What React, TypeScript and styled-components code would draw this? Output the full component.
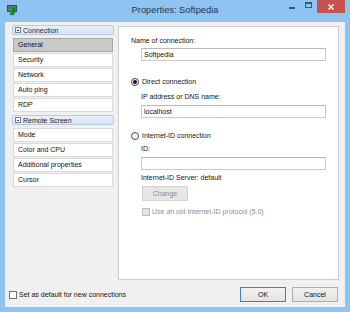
import React, { useState } from 'react';
import styled, { createGlobalStyle } from 'styled-components';

const GlobalStyle = createGlobalStyle`
  body {
    margin: 0;
    font-family: "Liberation Sans", Arial, sans-serif;
  }
`;

const Window = styled.div`
  position: relative;
  width: 350px;
  height: 312px;
  box-sizing: border-box;
  padding: 0 5px 5px;
  background: #8ec3f2;
  display: flex;
  flex-direction: column;
  overflow: hidden;
`;

const TitleBar = styled.div`
  height: 22px;
  display: grid;
  grid-template-columns: 1fr auto 1fr;
  align-items: start;
`;

const AppIcon = styled.svg`
  margin: 5px 0 0 2px;
`;

const Title = styled.div`
  line-height: 20px;
  font-size: 9.3px;
  color: #23384f;
`;

const Controls = styled.div`
  justify-self: end;
  display: flex;
  align-items: flex-start;
`;

const CtrlButton = styled.div<{ $w: number }>`
  width: ${(p) => p.$w}px;
  height: 13px;
  display: flex;
  align-items: center;
  justify-content: center;
`;

const CloseButton = styled(CtrlButton)`
  background: #c8524e;
`;

const MinGlyph = styled.div`
  width: 6px;
  height: 2px;
  margin-top: 2px;
  background: #3d5773;
`;

const MaxGlyph = styled.div`
  width: 7px;
  height: 6px;
  box-sizing: border-box;
  border: 1px solid #3d5773;
  border-top-width: 2px;
  margin-top: -4px;
`;

const Client = styled.div`
  flex: 1;
  background: #f0f0f0;
  display: flex;
  flex-direction: column;
`;

const Body = styled.div`
  height: 258px;
  box-sizing: border-box;
  padding: 4px 6px 0 7px;
  display: flex;
  gap: 4px;
`;

const Sidebar = styled.div`
  width: 102px;
  margin-top: -1px;
  display: flex;
  flex-direction: column;
`;

const GroupHeader = styled.div<{ $first?: boolean }>`
  height: 10px;
  box-sizing: border-box;
  margin: ${(p) => (p.$first ? '0' : '2px')} 0 3px;
  padding-left: 2px;
  border: 1px solid #b5cae3;
  border-radius: 2px;
  background: linear-gradient(#e8f0f9, #d7e4f3);
  display: flex;
  align-items: center;
  gap: 2px;
  font-size: 7px;
  color: #1b2a3b;
`;

const Toggle = styled.span`
  width: 6px;
  height: 6px;
  box-sizing: border-box;
  border: 1px solid #71839a;
  background: #fff;
  display: flex;
  align-items: center;
  justify-content: center;
  &::after {
    content: '';
    width: 2px;
    height: 1px;
    background: #33475e;
  }
`;

const NavItem = styled.div<{ $active?: boolean }>`
  height: 14px;
  box-sizing: border-box;
  margin: 0 1px 1px;
  padding-left: 4px;
  border: 1px solid ${(p) => (p.$active ? '#a8a8a8' : '#dadada')};
  background: ${(p) => (p.$active ? '#c9c9c9' : '#fff')};
  line-height: 12px;
  font-size: 7px;
  color: #111;
`;

const Panel = styled.div`
  width: 221px;
  height: 254px;
  box-sizing: border-box;
  padding: 9px 12px 0;
  background: #fff;
  border: 1px solid #cdcdcd;
  display: flex;
  flex-direction: column;
`;

const Label = styled.div<{ $mt?: number; $indent?: boolean }>`
  height: 9px;
  line-height: 9px;
  margin-top: ${(p) => p.$mt ?? 0}px;
  margin-left: ${(p) => (p.$indent ? 10 : 0)}px;
  font-size: 7px;
  color: #151515;
  white-space: nowrap;
`;

const TextBox = styled.div<{ $mt: number }>`
  width: 185px;
  height: 13px;
  box-sizing: border-box;
  margin: ${(p) => p.$mt}px 0 0 10px;
  padding-left: 2px;
  border: 1px solid #c9c9c9;
  border-top-color: #b8b8b8;
  line-height: 11px;
  font-size: 7px;
  color: #111;
`;

const RadioRow = styled.label<{ $mt: number }>`
  height: 9px;
  margin-top: ${(p) => p.$mt}px;
  display: flex;
  align-items: center;
  gap: 3px;
  font-size: 7px;
  color: #151515;
  cursor: default;
`;

const Radio = styled.span<{ $on?: boolean }>`
  width: 8px;
  height: 8px;
  box-sizing: border-box;
  border-radius: 50%;
  border: 1px solid #444;
  background: #fff;
  display: flex;
  align-items: center;
  justify-content: center;
  &::after {
    content: '';
    display: ${(p) => (p.$on ? 'block' : 'none')};
    width: 4px;
    height: 4px;
    border-radius: 50%;
    background: #111;
  }
`;

const Button = styled.div<{ $default?: boolean; $disabled?: boolean }>`
  width: 46px;
  height: 15px;
  box-sizing: border-box;
  border: 1px solid ${(p) => (p.$default ? '#3d80b3' : p.$disabled ? '#d2d2d2' : '#acacac')};
  background: ${(p) => (p.$disabled ? '#e6e6e6' : 'linear-gradient(#f1f1f1, #e3e3e3)')};
  display: flex;
  align-items: center;
  justify-content: center;
  font-size: 7px;
  color: ${(p) => (p.$disabled ? '#8a8a8a' : '#111')};
`;

const ChangeButton = styled(Button)`
  margin: 4px 0 0 11px;
`;

const CheckRow = styled.label<{ $mt?: number; $indent?: number; $muted?: boolean }>`
  height: 9px;
  margin: ${(p) => p.$mt ?? 0}px 0 0 ${(p) => p.$indent ?? 0}px;
  display: flex;
  align-items: center;
  gap: 2px;
  font-size: 7px;
  color: ${(p) => (p.$muted ? '#8e8e8e' : '#151515')};
  white-space: nowrap;
  cursor: default;
`;

const Box = styled.span<{ $disabled?: boolean }>`
  width: 8px;
  height: 8px;
  box-sizing: border-box;
  border: 1px solid ${(p) => (p.$disabled ? '#bdbdbd' : '#707070')};
  background: ${(p) => (p.$disabled ? '#e4e4e4' : '#fff')};
`;

const Footer = styled.div`
  flex: 1;
  padding: 2px 7px 0 4px;
  display: flex;
  align-items: center;
`;

const Spacer = styled.div`
  flex: 1;
`;

const ButtonRow = styled.div`
  display: flex;
  gap: 6px;
`;

const connectionItems = ['General', 'Security', 'Network', 'Auto ping', 'RDP'];
const screenItems = ['Mode', 'Color and CPU', 'Additional properties', 'Cursor'];

const App = () => {
  const [active, setActive] = useState('General');
  const [direct, setDirect] = useState(true);

  return (
    <>
      <GlobalStyle />
      <Window>
        <TitleBar>
          <AppIcon width="11" height="11" viewBox="0 0 11 11">
            <rect x="0" y="0" width="10" height="7" fill="#4a4a4a" />
            <rect x="1" y="1" width="8" height="5" fill="#6d6d6d" />
            <rect x="3" y="8" width="4" height="2" fill="#4a4a4a" />
            <path d="M3 3 L5.5 2 L8 3 L8 6 Q8 9 5.5 10.5 Q3 9 3 6 Z" fill="#17a33a" />
            <path d="M5.5 2 L8 3 L8 6 Q8 9 5.5 10.5 Z" fill="#0f7f2b" />
          </AppIcon>
          <Title>Properties: Softpedia</Title>
          <Controls>
            <CtrlButton $w={16}>
              <MinGlyph />
            </CtrlButton>
            <CtrlButton $w={17}>
              <MaxGlyph />
            </CtrlButton>
            <CloseButton $w={28}>
              <svg width="6" height="6" viewBox="0 0 6 6">
                <path d="M0.5 0.5 L5.5 5.5 M5.5 0.5 L0.5 5.5" stroke="#fff" strokeWidth="1.4" />
              </svg>
            </CloseButton>
          </Controls>
        </TitleBar>
        <Client>
          <Body>
            <Sidebar>
              <GroupHeader $first>
                <Toggle />
                Connection
              </GroupHeader>
              {connectionItems.map((item) => (
                <NavItem key={item} $active={active === item} onClick={() => setActive(item)}>
                  {item}
                </NavItem>
              ))}
              <GroupHeader>
                <Toggle />
                Remote Screen
              </GroupHeader>
              {screenItems.map((item) => (
                <NavItem key={item} $active={active === item} onClick={() => setActive(item)}>
                  {item}
                </NavItem>
              ))}
            </Sidebar>
            <Panel>
              <Label>Name of connection:</Label>
              <TextBox $mt={3}>Softpedia</TextBox>
              <RadioRow $mt={16} onClick={() => setDirect(true)}>
                <Radio $on={direct} />
                Direct connection
              </RadioRow>
              <Label $mt={6} $indent>
                IP address or DNS name:
              </Label>
              <TextBox $mt={4}>localhost</TextBox>
              <RadioRow $mt={13} onClick={() => setDirect(false)}>
                <Radio $on={!direct} />
                Internet-ID connection
              </RadioRow>
              <Label $mt={4} $indent>
                ID:
              </Label>
              <TextBox $mt={4} />
              <Label $mt={3} $indent>
                Internet-ID Server: default
              </Label>
              <ChangeButton $disabled>Change</ChangeButton>
              <CheckRow $mt={6} $indent={11} $muted>
                <Box $disabled />
                Use an old Internet-ID protocol (5.0)
              </CheckRow>
            </Panel>
          </Body>
          <Footer>
            <CheckRow>
              <Box />
              Set as default for new connections
            </CheckRow>
            <Spacer />
            <ButtonRow>
              <Button $default>OK</Button>
              <Button>Cancel</Button>
            </ButtonRow>
          </Footer>
        </Client>
      </Window>
    </>
  );
};

export default App;
